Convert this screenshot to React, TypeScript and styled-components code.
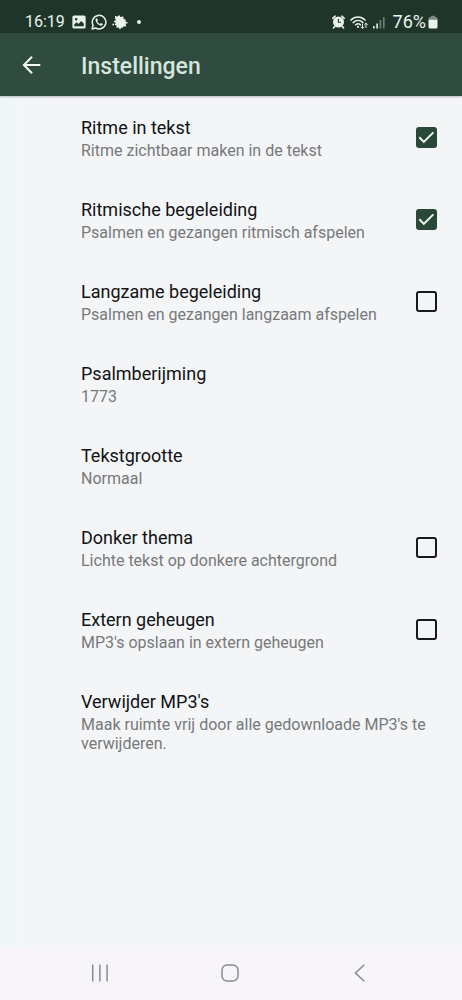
import React, { useState } from "react";
import styled, { createGlobalStyle } from "styled-components";

const GlobalStyle = createGlobalStyle`
  *, *::before, *::after { box-sizing: border-box; }
  body {
    margin: 0;
    background: #f4f5f7;
    font-family: Roboto, "Noto Sans", sans-serif;
  }
`;

const Screen = styled.div`
  display: flex;
  flex-direction: column;
  min-height: 100vh;
  background: linear-gradient(to right, #f0f7f7 0, #f4f5f7 56px);
`;

const StatusBar = styled.div`
  display: flex;
  align-items: center;
  justify-content: space-between;
  height: 33px;
  padding: 11px 24px 0 25px;
  background: #20352a;
  color: #e9f3ec;
`;

const StatusGroup = styled.div<{ $gap: number }>`
  display: flex;
  align-items: center;
  gap: ${(p) => p.$gap}px;

  svg { display: block; }
`;

const StatusText = styled.span<{ $size: number }>`
  font-size: ${(p) => p.$size}px;
  line-height: 22px;
`;

const AppBar = styled.header`
  display: flex;
  align-items: center;
  gap: 29px;
  height: 63px;
  padding: 0 11px;
  background: #304b3f;
  box-shadow: 0 1px 2px rgba(0, 0, 0, 0.25);
`;

const IconButton = styled.button`
  display: flex;
  align-items: center;
  justify-content: center;
  width: 41px;
  height: 41px;
  padding: 0;
  border: 0;
  background: none;
  color: #f3faf6;
  cursor: pointer;
`;

const PageTitle = styled.h1`
  margin: 0;
  padding-top: 4px;
  color: #d7e5dc;
  font-size: 23px;
  font-weight: 500;
  line-height: 28px;
`;

const SettingsList = styled.main`
  flex: 1;
`;

const Row = styled.div`
  display: flex;
  align-items: center;
  justify-content: space-between;
  gap: 20px;
  width: 100%;
  padding: 19px 25px 18px 81px;
  border: 0;
  background: none;
  font-family: inherit;
  text-align: left;
  cursor: pointer;
`;

const RowText = styled.span`
  display: flex;
  flex-direction: column;
  gap: 2px;
  padding-top: 2px;
`;

const RowTitle = styled.span`
  color: #111315;
  font-size: 18px;
  line-height: 22px;
`;

const RowSummary = styled.span`
  color: #77797b;
  font-size: 16px;
  line-height: 19px;
`;

const Checkbox = styled.input`
  flex: none;
  appearance: none;
  width: 21px;
  height: 21px;
  margin: 0;
  border: 2px solid #17191c;
  border-radius: 3px;
  background: transparent;
  cursor: pointer;

  &:checked {
    border-color: #294838;
    background: #294838;
  }
`;

const CheckSlot = styled.span`
  display: grid;
  flex: none;

  > * { grid-area: 1 / 1; }
  svg { pointer-events: none; }
`;

const NavBar = styled.nav`
  display: grid;
  grid-template-columns: repeat(3, 1fr);
  justify-items: center;
  align-items: center;
  height: 54px;
  padding: 0 37px 0 35px;
  background: #f7f5f9;
`;

const NavButton = styled(IconButton)`
  color: #8b8a8e;
`;

type Setting = {
  id: string;
  title: string;
  summary: string;
  kind: "check" | "action";
};

const settings: Setting[] = [
  { id: "ritme", title: "Ritme in tekst", summary: "Ritme zichtbaar maken in de tekst", kind: "check" },
  { id: "ritmisch", title: "Ritmische begeleiding", summary: "Psalmen en gezangen ritmisch afspelen", kind: "check" },
  { id: "langzaam", title: "Langzame begeleiding", summary: "Psalmen en gezangen langzaam afspelen", kind: "check" },
  { id: "berijming", title: "Psalmberijming", summary: "1773", kind: "action" },
  { id: "grootte", title: "Tekstgrootte", summary: "Normaal", kind: "action" },
  { id: "donker", title: "Donker thema", summary: "Lichte tekst op donkere achtergrond", kind: "check" },
  { id: "extern", title: "Extern geheugen", summary: "MP3's opslaan in extern geheugen", kind: "check" },
  { id: "verwijder", title: "Verwijder MP3's", summary: "Maak ruimte vrij door alle gedownloade MP3's te verwijderen.", kind: "action" },
];

const PictureIcon = () => (
  <svg width="14" height="14" viewBox="0 0 14 14" aria-hidden="true">
    <path
      fill="currentColor"
      fillRule="evenodd"
      d="M2 .5h10A1.6 1.6 0 0 1 13.6 2v10a1.6 1.6 0 0 1-1.6 1.6H2A1.6 1.6 0 0 1 .4 12V2A1.6 1.6 0 0 1 2 .5ZM2.2 11.2h9.6V8.6L9.2 6 6.4 9 4.6 7.3 2.2 9.6ZM4.2 3a1.3 1.3 0 1 0 0 2.6A1.3 1.3 0 0 0 4.2 3Z"
    />
  </svg>
);

const WhatsAppIcon = () => (
  <svg width="16" height="16" viewBox="0 0 16 16" fill="none" aria-hidden="true">
    <path d="M1.1 14.9l1-3.6A6.8 6.8 0 1 1 4.7 14Z" stroke="currentColor" strokeWidth="1.5" strokeLinejoin="round" />
    <path
      fill="currentColor"
      d="M5.6 4.3c-.9.4-1.3 1.3-1 2.3.7 2.5 2.4 4.3 4.9 5 1.2.3 2.2-.3 2.3-1.5 0-.3-1.7-1.2-2-1.1l-.8.9C7.7 9.4 6.7 8.4 6.2 7.3l.7-.9c.1-.3-.6-2.1-1.3-2.1Z"
    />
  </svg>
);

const SplashIcon = () => (
  <svg width="16" height="15" viewBox="0 0 16 15" fill="currentColor" aria-hidden="true">
    <path d="M3 1.2C3.600.6 4.500 1 5.200 1.700 5.900 1.500 6.400.2 7.200.3 8 .5 7.900 1.800 8.600 2.100 9.500 2.200 10.700 1.200 11.300 1.800 11.800 2.400 11.300 3.300 11.800 4 12.500 4.500 13.600 4.300 13.700 5 13.800 5.800 13.400 6.300 13.900 6.800 14.700 7.100 15.700 7.100 15.700 7.800 15.600 8.500 14.200 8.400 13.700 9 13.400 9.800 14.600 10.800 14 11.400 13.200 11.800 12.300 11 11.500 11.300 11 11.800 11.200 12.700 10.500 12.900 9.900 13 9.600 12.500 9.200 12.600 8.700 13 8.800 14.400 8.100 14.400 7.300 14.400 7.300 12.900 6.700 12.500 6 12.300 4.900 13.100 4.400 12.500 4.100 11.900 4.800 11.200 4.500 10.600 4.200 10 3 10.400 2.700 9.800 2.500 9.100 3.700 8.700 3.700 8 3.600 7.300 1.700 7.200 1.800 6.400 1.900 5.700 3.300 5.800 3.700 5.200 4 4.400 2.300 2 3 1.200Z" />
    <circle cx="1.2" cy="9.5" r=".9" />
  </svg>
);

const DotIcon = () => (
  <svg width="10" height="14" viewBox="0 0 10 14" aria-hidden="true">
    <circle cx="6" cy="7" r="2" fill="currentColor" />
  </svg>
);

const AlarmIcon = () => (
  <svg width="13" height="14" viewBox="0 0 13 14" fill="none" aria-hidden="true">
    <circle cx="6.5" cy="7" r="5.5" fill="currentColor" />
    <path d="M.8 3.300 3.100 1.200M12.200 3.300 9.900 1.200M2.800 11.300 1.500 13M10.200 11.300l1.300 1.700" stroke="currentColor" strokeWidth="1.6" strokeLinecap="round" />
    <path d="M6.400 4v3.300H9" stroke="#20352a" strokeWidth="1.1" />
  </svg>
);

const WifiIcon = () => (
  <svg width="18" height="15" viewBox="0 0 18 15" fill="none" stroke="currentColor" strokeLinecap="round" aria-hidden="true">
    <path d="M1 5.100c4-4.100 10-4.100 14 0M3.200 7.600c2.900-2.800 6.800-2.800 9.700 0M5.600 9.800c1.600-1.300 3.300-1.300 4.900 0" strokeWidth="1.5" />
    <circle cx="8" cy="11.8" r="1.1" fill="currentColor" stroke="none" />
    <path d="M12.500 9v4.200M11.200 12l1.300 1.300 1.300-1.300M16 12.500V8.300M14.700 9.500 16 8.200l1.300 1.300" strokeWidth="1" />
  </svg>
);

const SignalIcon = () => (
  <svg width="12" height="13" viewBox="0 0 12 13" fill="currentColor" aria-hidden="true">
    <rect x="0" y="10" width="1.6" height="2.5" />
    <rect x="3.3" y="7.5" width="1.6" height="5" />
    <rect x="6.6" y="4" width="1.6" height="8.5" opacity=".4" />
    <rect x="10" y="1" width="1.6" height="11.5" opacity=".4" />
  </svg>
);

const BatteryIcon = () => (
  <svg width="10" height="14" viewBox="0 0 10 14" fill="currentColor" aria-hidden="true">
    <path d="M3 .8h4V2h1a1.6 1.6 0 0 1 1.5 1.6V5H.5V3.6A1.6 1.6 0 0 1 2 2h1Z" opacity=".45" />
    <path d="M.5 4.800h9V12A1.5 1.5 0 0 1 8 13.500H2A1.5 1.5 0 0 1 .5 12Z" />
  </svg>
);

const BackArrow = () => (
  <svg width="20" height="20" viewBox="0 0 20 20" fill="none" stroke="currentColor" strokeWidth="2" aria-hidden="true">
    <path d="M18.300 10H2.500M10 1.800 1.900 10l8.100 8.200" />
  </svg>
);

const CheckMark = () => (
  <svg width="21" height="21" viewBox="0 0 21 21" fill="none" aria-hidden="true">
    <path d="m3.300 10.300 4.500 4.600 9.600-9.500" stroke="#f3faf5" strokeWidth="2" />
  </svg>
);

const RecentsIcon = () => (
  <svg width="18" height="18" viewBox="0 0 18 18" stroke="currentColor" strokeWidth="1.5" strokeLinecap="round" aria-hidden="true">
    <path d="M1.700 1v16M8.900 1v16M16.100 1v16" />
  </svg>
);

const HomeIcon = () => (
  <svg width="18" height="18" viewBox="0 0 18 18" fill="none" stroke="currentColor" strokeWidth="1.5" aria-hidden="true">
    <rect x="1" y="1" width="16" height="16" rx="5" />
  </svg>
);

const NavBackIcon = () => (
  <svg width="12" height="18" viewBox="0 0 12 18" fill="none" stroke="currentColor" strokeWidth="1.5" aria-hidden="true">
    <path d="M10.300.8 1.500 9l8.800 8.200" />
  </svg>
);

export default function App() {
  const [values, setValues] = useState<Record<string, boolean>>({ ritme: true, ritmisch: true });
  const toggle = (id: string) => setValues((v) => ({ ...v, [id]: !v[id] }));

  return (
    <>
      <GlobalStyle />
      <Screen>
        <StatusBar>
          <StatusGroup $gap={7}>
            <StatusText $size={16}>16:19</StatusText>
            <StatusGroup $gap={5}>
              <PictureIcon />
              <WhatsAppIcon />
              <SplashIcon />
              <DotIcon />
            </StatusGroup>
          </StatusGroup>
          <StatusGroup $gap={8}>
            <StatusGroup $gap={5}>
              <AlarmIcon />
              <WifiIcon />
              <SignalIcon />
            </StatusGroup>
            <StatusGroup $gap={2}>
              <StatusText $size={18}>76%</StatusText>
              <BatteryIcon />
            </StatusGroup>
          </StatusGroup>
        </StatusBar>
        <AppBar>
          <IconButton type="button" aria-label="Terug">
            <BackArrow />
          </IconButton>
          <PageTitle>Instellingen</PageTitle>
        </AppBar>
        <SettingsList>
          {settings.map(({ id, title, summary, kind }) => {
            const text = (
              <RowText>
                <RowTitle>{title}</RowTitle>
                <RowSummary>{summary}</RowSummary>
              </RowText>
            );
            return kind === "check" ? (
              <Row as="label" key={id} htmlFor={id}>
                {text}
                <CheckSlot>
                  <Checkbox id={id} type="checkbox" checked={!!values[id]} onChange={() => toggle(id)} />
                  {values[id] && <CheckMark />}
                </CheckSlot>
              </Row>
            ) : (
              <Row as="button" key={id} type="button">
                {text}
              </Row>
            );
          })}
        </SettingsList>
        <NavBar aria-label="Systeemnavigatie">
          <NavButton type="button" aria-label="Recente apps">
            <RecentsIcon />
          </NavButton>
          <NavButton type="button" aria-label="Startscherm">
            <HomeIcon />
          </NavButton>
          <NavButton type="button" aria-label="Vorige">
            <NavBackIcon />
          </NavButton>
        </NavBar>
      </Screen>
    </>
  );
}
